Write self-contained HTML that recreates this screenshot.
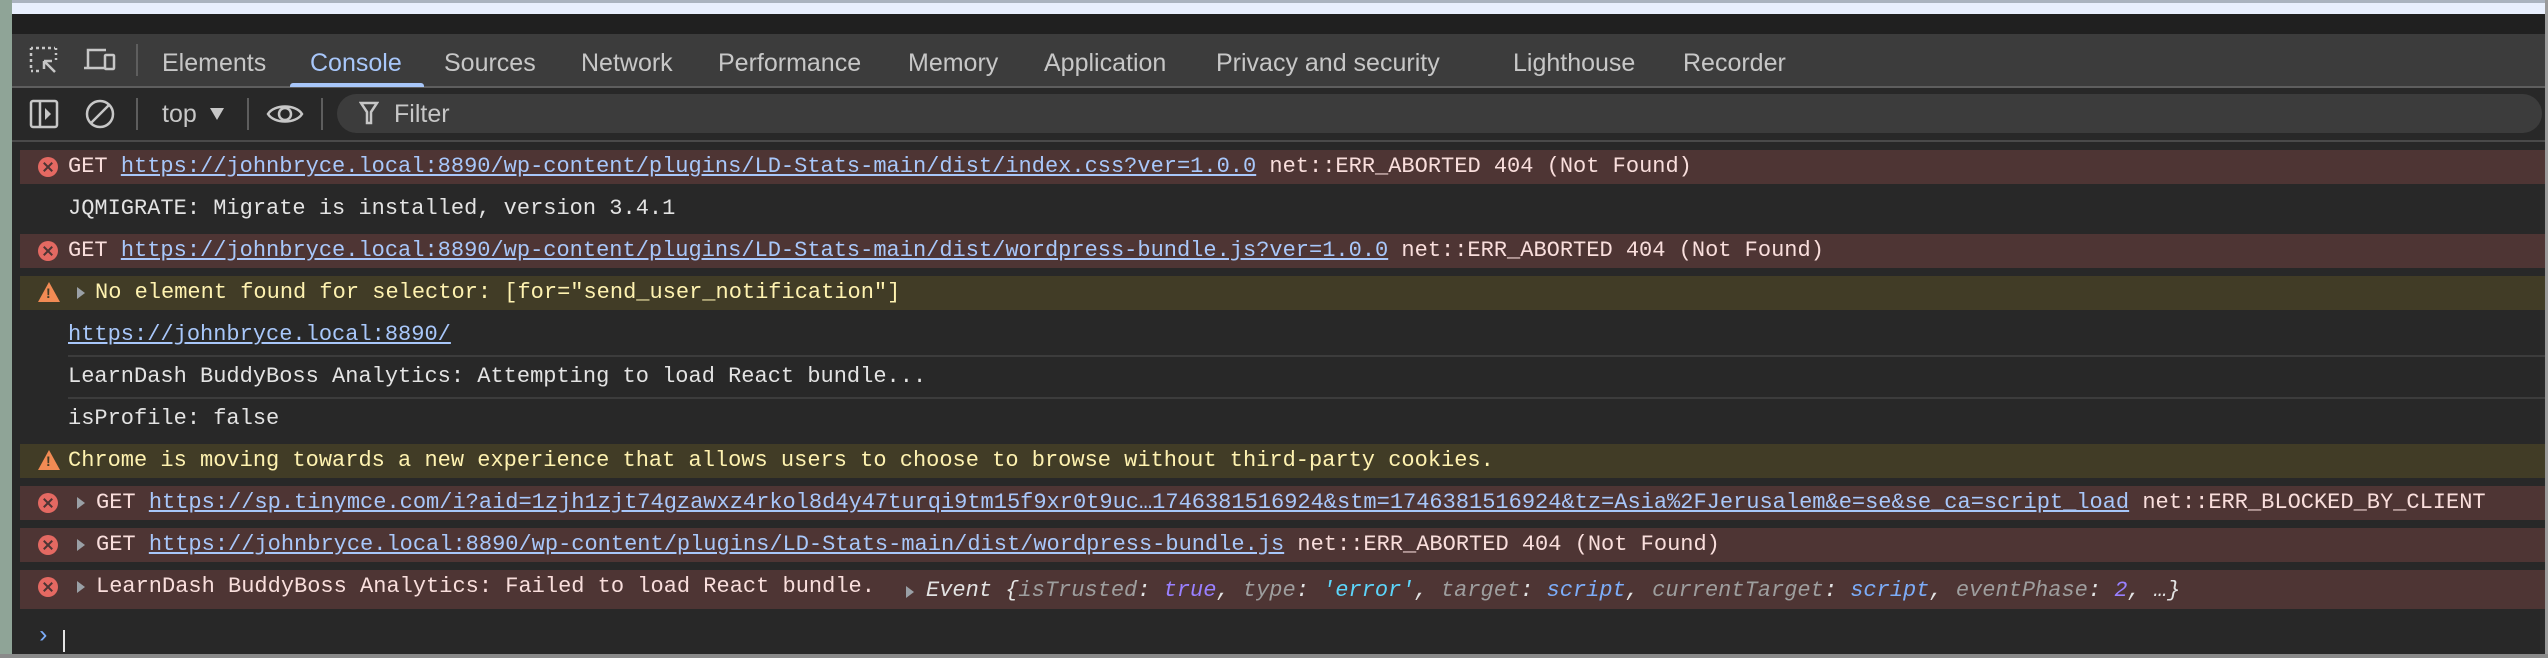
<!DOCTYPE html>
<html><head><meta charset="utf-8"><style>
*{margin:0;padding:0;box-sizing:border-box}
body{width:2548px;height:658px;background:#282828;position:relative;overflow:hidden;font-family:"Liberation Sans",sans-serif}
.abs{position:absolute}
.tab{position:absolute;top:45px;font-size:25px;color:#c7c7c7;line-height:36px;white-space:nowrap}
.row{position:absolute;left:20px;right:3px;height:34px;font-family:"Liberation Mono",monospace;font-size:22px;line-height:34px;white-space:nowrap;color:#e3e3e3}
.err{background:#4e3534;color:#f9dedc}
.warn{background:#413c26;color:#fef2b0}
.t{position:absolute;top:0}
a,.lnk{color:#a8c7fa;text-decoration:underline}
.ei{position:absolute;left:18px;top:7px;width:20px;height:20px;border-radius:50%;background:#e46962}
.ei:before,.ei:after{content:"";position:absolute;left:9px;top:4px;width:2px;height:12px;background:#4e3534;transform:rotate(45deg)}
.ei:after{transform:rotate(-45deg)}
.wi{position:absolute;left:18px;top:6px;width:0;height:0;border-left:11px solid transparent;border-right:11px solid transparent;border-bottom:20px solid #f28b54}
.wi:after{content:"!";position:absolute;left:-3px;top:3px;font:bold 14px "Liberation Sans",sans-serif;color:#413c26;line-height:16px}
.tri{position:absolute;top:11px;width:0;height:0;border-top:6px solid transparent;border-bottom:6px solid transparent;border-left:8px solid #9aa0a6}
.sep{position:absolute;left:68px;right:3px;height:2px;background:#3c3c3c}
.k{color:#9e9e9e}.p{color:#9980ff}.s{color:#5cd5fb}.b{color:#7cacf8}
</style></head><body>
<div class="abs" style="left:0;top:0;width:2548px;height:3px;background:#aab3bf"></div>
<div class="abs" style="left:0;top:3px;width:2548px;height:11px;background:#e8effd"></div>
<div class="abs" style="left:0;top:14px;width:2548px;height:20px;background:#202020"></div>
<div class="abs" style="left:0;top:34px;width:2548px;height:52px;background:#3c3c3c"></div>
<div class="abs" style="left:0;top:86px;width:2548px;height:2px;background:#5e5e5e"></div>
<div class="abs" style="left:290px;top:83px;width:134px;height:4px;background:#a8c7fa;border-radius:3px 3px 0 0"></div>
<div class="abs" style="left:0;top:140px;width:2548px;height:2px;background:#4a4a4a"></div>
<div class="abs" style="left:337px;top:94px;width:2205px;height:39px;background:#3c3c3c;border-radius:20px"></div>
<div class="abs" style="left:0;top:0;width:12px;height:658px;background:#8fa497"></div>
<div class="abs" style="left:2545px;top:0;width:3px;height:658px;background:#9a9a9a"></div>
<div class="abs" style="left:0;top:654px;width:2548px;height:4px;background:#8a8a8a"></div>

<svg class="abs" style="left:28px;top:44px" width="34" height="32" viewBox="0 0 34 32" fill="none" stroke="#c7c7c7" stroke-width="2.5">
<path d="M3 4h2M8 4h3M14 4h3M20 4h3M26 4h1M28 4v2M28 9v2M28 14v2M3 4v2M3 9v3M3 15v3M3 21v3M3 27h2M8 27h3"/><path d="M27 28L16 17M16 17v8M16 17h8"/></svg>
<svg class="abs" style="left:82px;top:44px" width="36" height="32" viewBox="0 0 36 32" fill="none" stroke="#c7c7c7" stroke-width="2.5">
<path d="M6 24V6h18M2 24h20"/><rect x="23" y="11" width="9" height="14" rx="1"/></svg>
<div class="abs" style="left:136px;top:44px;width:2px;height:32px;background:#5e5e5e"></div>
<div class="tab" style="left:162px">Elements</div>
<div class="tab" style="left:310px;color:#a8c7fa">Console</div>
<div class="tab" style="left:444px">Sources</div>
<div class="tab" style="left:581px">Network</div>
<div class="tab" style="left:718px">Performance</div>
<div class="tab" style="left:908px">Memory</div>
<div class="tab" style="left:1044px">Application</div>
<div class="tab" style="left:1216px">Privacy and security</div>
<div class="tab" style="left:1513px">Lighthouse</div>
<div class="tab" style="left:1683px">Recorder</div>

<svg class="abs" style="left:28px;top:98px" width="32" height="32" viewBox="0 0 32 32" fill="none" stroke="#c7c7c7" stroke-width="2.5">
<rect x="3" y="3" width="26" height="26" rx="2"/><path d="M12 3v26"/><path d="M17 10l6 6-6 6z" fill="#c7c7c7" stroke="none"/></svg>
<svg class="abs" style="left:84px;top:98px" width="32" height="32" viewBox="0 0 32 32" fill="none" stroke="#c7c7c7" stroke-width="2.5">
<circle cx="16" cy="16" r="13"/><path d="M7 25L25 7"/></svg>
<div class="abs" style="left:136px;top:98px;width:2px;height:32px;background:#5e5e5e"></div>
<div class="abs" style="left:162px;top:96px;font-size:25px;color:#c7c7c7;line-height:36px">top</div>
<div class="abs" style="left:210px;top:108px;width:0;height:0;border-left:7px solid transparent;border-right:7px solid transparent;border-top:12px solid #c7c7c7"></div>
<div class="abs" style="left:247px;top:98px;width:2px;height:32px;background:#5e5e5e"></div>
<svg class="abs" style="left:266px;top:99px" width="38" height="30" viewBox="0 0 38 30" fill="none" stroke="#c7c7c7" stroke-width="2.5">
<path d="M2 15C8 5 30 5 36 15C30 25 8 25 2 15z"/><circle cx="19" cy="15" r="6"/></svg>
<div class="abs" style="left:321px;top:98px;width:2px;height:32px;background:#5e5e5e"></div>
<svg class="abs" style="left:359px;top:101px" width="20" height="24" viewBox="0 0 20 24" fill="none" stroke="#c7c7c7" stroke-width="2.5">
<path d="M2 2h16l-6 9v11h-4V11z"/></svg>
<div class="abs" style="left:394px;top:96px;font-size:25px;color:#c7c7c7;line-height:36px">Filter</div>

<div class="row err" style="top:150px"><i class="ei"></i><span class="t" style="left:48px">GET <a>https://johnbryce.local:8890/wp-content/plugins/LD-Stats-main/dist/index.css?ver=1.0.0</a> net::ERR_ABORTED 404 (Not Found)</span></div>
<div class="row" style="top:192px"><span class="t" style="left:48px">JQMIGRATE: Migrate is installed, version 3.4.1</span></div>
<div class="row err" style="top:234px"><i class="ei"></i><span class="t" style="left:48px">GET <a>https://johnbryce.local:8890/wp-content/plugins/LD-Stats-main/dist/wordpress-bundle.js?ver=1.0.0</a> net::ERR_ABORTED 404 (Not Found)</span></div>
<div class="row warn" style="top:276px"><i class="wi"></i><i class="tri" style="left:57px"></i><span class="t" style="left:75px">No element found for selector: [for="send_user_notification"]</span></div>
<div class="row" style="top:318px"><span class="t lnk" style="left:48px">https://johnbryce.local:8890/</span></div>
<div class="sep" style="top:355px"></div>
<div class="row" style="top:360px"><span class="t" style="left:48px">LearnDash BuddyBoss Analytics: Attempting to load React bundle...</span></div>
<div class="sep" style="top:397px"></div>
<div class="row" style="top:402px"><span class="t" style="left:48px">isProfile: false</span></div>
<div class="row warn" style="top:444px"><i class="wi"></i><span class="t" style="left:48px">Chrome is moving towards a new experience that allows users to choose to browse without third-party cookies.</span></div>
<div class="row err" style="top:486px"><i class="ei"></i><i class="tri" style="left:57px"></i><span class="t" style="left:76px">GET <a>https://sp.tinymce.com/i?aid=1zjh1zjt74gzawxz4rkol8d4y47turqi9tm15f9xr0t9uc…1746381516924&amp;stm=1746381516924&amp;tz=Asia%2FJerusalem&amp;e=se&amp;se_ca=script_load</a> net::ERR_BLOCKED_BY_CLIENT</span></div>
<div class="row err" style="top:528px"><i class="ei"></i><i class="tri" style="left:57px"></i><span class="t" style="left:76px">GET <a>https://johnbryce.local:8890/wp-content/plugins/LD-Stats-main/dist/wordpress-bundle.js</a> net::ERR_ABORTED 404 (Not Found)</span></div>
<div class="row err" style="top:570px;height:39px"><i class="ei"></i><i class="tri" style="left:57px"></i><span class="t" style="left:76px">LearnDash BuddyBoss Analytics: Failed to load React bundle.</span>
<i class="tri" style="left:886px;top:16px"></i><span class="t" style="left:906px;top:4px;font-style:italic;color:#e3e3e3">Event {<span class="k">isTrusted</span>: <span class="p">true</span>, <span class="k">type</span>: <span class="s">'error'</span>, <span class="k">target</span>: <span class="b">script</span>, <span class="k">currentTarget</span>: <span class="b">script</span>, <span class="k">eventPhase</span>: <span class="p">2</span>, …}</span></div>
<div class="abs" style="left:36px;top:620px;font:24px 'Liberation Mono',monospace;color:#7cacf8;line-height:34px">›</div>
<div class="abs" style="left:63px;top:630px;width:2px;height:22px;background:#e3e3e3"></div>
</body></html>
